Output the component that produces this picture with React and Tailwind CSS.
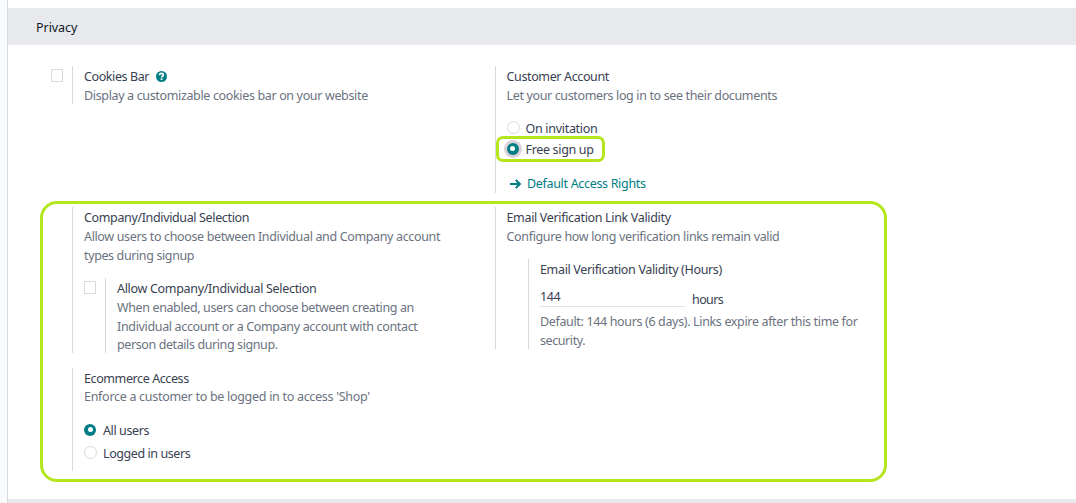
import React from "react";

const title = "block whitespace-nowrap text-[#374151]";
const desc = "block whitespace-nowrap text-[#6b7280]";

function Radio({ checked, focused }) {
  if (checked) {
    return (
      <span
        className={
          "mb-[2px] flex size-3 shrink-0 items-center justify-center rounded-full bg-[#017e84] " +
          (focused ? "ring-[3px] ring-[#dcd3da]" : "")
        }
      >
        <span className="size-[5px] rounded-full bg-white" />
      </span>
    );
  }
  return <span className="mb-[2px] block size-[13px] shrink-0 rounded-full border border-[#d8dadd] bg-white" />;
}

function Checkbox() {
  return <span className="block h-[13px] w-3 shrink-0 border border-[#d8dadd] bg-white" />;
}

function HelpIcon() {
  return (
    <svg className="size-[11px] shrink-0" viewBox="0 0 11 11">
      <circle cx="5.5" cy="5.5" r="5.5" fill="#017e84" />
      <path d="M3.5 4.2C3.6 2.9 4.4 2.4 5.5 2.4c1.1 0 1.8.6 1.8 1.5C7.3 5 5.6 5.1 5.6 6.6" fill="none" stroke="#fff" strokeWidth="1.6" />
      <rect x="4.7" y="7.3" width="1.8" height="1.6" fill="#fff" />
    </svg>
  );
}

function ArrowIcon() {
  return (
    <svg className="h-[10px] w-3 shrink-0" viewBox="0 0 12 10">
      <path d="M0 5h10M5.8 1l4.1 4-4.1 4" fill="none" stroke="#017e84" strokeWidth="2" />
    </svg>
  );
}

export default function App() {
  return (
    <div className="relative flex h-[503px] w-[1076px] overflow-hidden bg-white font-['Noto_Sans','Open_Sans',sans-serif] text-[12.5px] leading-[19px]">
      <div className="w-2 shrink-0 border-r border-[#d8dadd] bg-[#f9fafb]" />
      <main className="flex flex-1 flex-col pt-2">
        <h2 className="flex h-[37px] shrink-0 items-center bg-[#e7e9ed] pt-0.5 pl-7 text-[#111827]">
          <span className="tracking-[-0.05px]">Privacy</span>
        </h2>

        <div className="grid h-[454px] shrink-0 grid-cols-[423px_1fr] grid-rows-[141px_161px_1fr] items-start pt-[21px] pl-[43px]">
          <section className="flex">
            <div className="w-[21px] pt-[3px]"><Checkbox /></div>
            <div className="h-[38px] border-l border-[#d8dadd] pl-[11px] pt-px">
              <div className="flex items-center gap-[7px]">
                <span className={title + " tracking-[-0.4px]"}>Cookies Bar</span>
                <HelpIcon />
              </div>
              <span className={desc + " tracking-[-0.35px]"}>Display a customizable cookies bar on your website</span>
            </div>
          </section>

          <section className="ml-[21px] h-[127px] border-l border-[#d8dadd] pl-[10.5px] pt-px">
            <span className={title + " tracking-[-0.37px]"}>Customer Account</span>
            <span className={desc + " tracking-[-0.36px]"}>Let your customers log in to see their documents</span>
            <div className="mt-[13px] flex h-[21px] items-center gap-[6px]">
              <Radio />
              <span className={title + " tracking-[-0.3px]"}>On invitation</span>
            </div>
            <div className="flex h-[21px] items-center gap-[7px]">
              <Radio checked focused />
              <span className={title + " tracking-[-0.33px]"}>Free sign up</span>
            </div>
            <a className="mt-[14px] ml-[3.5px] flex items-center gap-[5px] whitespace-nowrap text-[#017e84]">
              <ArrowIcon />
              <span className="tracking-[-0.32px]">Default Access Rights</span>
            </a>
          </section>

          <section className="ml-[21px] h-[146px] border-l border-[#d8dadd] pl-[11px] pt-px">
            <span className={title + " tracking-[-0.36px]"}>Company/Individual Selection</span>
            <span className={desc + " tracking-[-0.355px]"}>Allow users to choose between Individual and Company account</span>
            <span className={desc + " tracking-[-0.38px]"}>types during signup</span>
            <div className="mt-[13px] flex">
              <div className="w-[21px] pt-[3px]"><Checkbox /></div>
              <div className="h-[75px] border-l border-[#d8dadd] pl-[11px] pt-[2px] leading-[18.8px]">
                <span className={title + " tracking-[-0.31px]"}>Allow Company/Individual Selection</span>
                <span className={desc + " tracking-[-0.38px]"}>When enabled, users can choose between creating an</span>
                <span className={desc + " tracking-[-0.34px]"}>Individual account or a Company account with contact</span>
                <span className={desc + " tracking-[-0.4px]"}>person details during signup.</span>
              </div>
            </div>
          </section>

          <section className="ml-[21px] h-[142px] border-l border-[#d8dadd] pl-[10.5px] pt-px">
            <span className={title + " tracking-[-0.33px]"}>Email Verification Link Validity</span>
            <span className={desc + " tracking-[-0.34px]"}>Configure how long verification links remain valid</span>
            <div className="mt-[13px] ml-[21.5px] h-[90px] border-l border-[#d8dadd] pl-[11px] pt-px">
              <span className={title + " tracking-[-0.34px]"}>Email Verification Validity (Hours)</span>
              <div className="mt-2 flex h-[25px]">
                <div className="h-[20px] w-[145px] border-b border-[#e2e4e8] tracking-[-0.4px] text-[#374151]">144</div>
                <span className={title + " ml-[7px] pt-[3px] tracking-[-0.6px]"}>hours</span>
              </div>
              <span className={desc + " tracking-[-0.35px]"}>Default: 144 hours (6 days). Links expire after this time for</span>
              <span className={desc + " tracking-[-0.42px]"}>security.</span>
            </div>
          </section>

          <section className="ml-[21px] h-[103px] border-l border-[#d8dadd] pl-[11px] pt-px">
            <span className={title + " tracking-[-0.4px]"}>Ecommerce Access</span>
            <span className={desc + " -mt-px tracking-[-0.29px]"}>Enforce a customer to be logged in to access 'Shop'</span>
            <div className="mt-[15px] flex h-[19px] items-center gap-[7px]">
              <Radio checked />
              <span className={title + " tracking-[-0.4px]"}>All users</span>
            </div>
            <div className="mt-1 flex h-[19px] items-center gap-[6px]">
              <Radio />
              <span className={title + " tracking-[-0.42px]"}>Logged in users</span>
            </div>
          </section>
        </div>
        <div className="h-1 shrink-0 bg-[#e7e9ed]" />
      </main>

      <div className="absolute left-[496px] top-[136px] h-[26px] w-[109px] rounded-[7px] border-[3px] border-[#b5e61d]" />
      <div className="absolute left-[40px] top-[201px] h-[281px] w-[847px] rounded-[17px] border-[3px] border-[#b5e61d]" />
    </div>
  );
}
